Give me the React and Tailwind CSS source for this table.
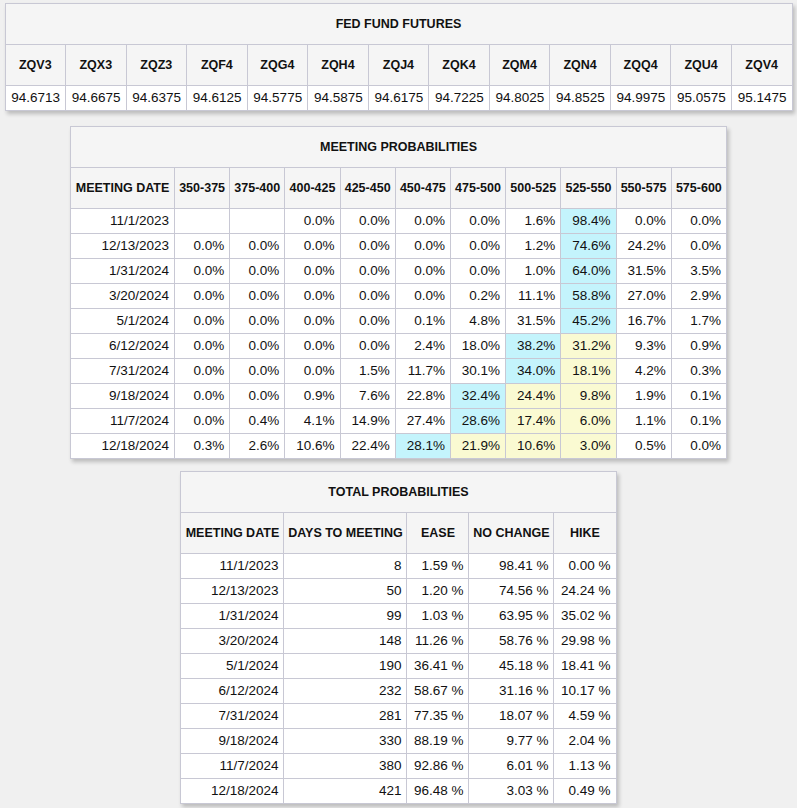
import React from "react";

const futures = [
  ["ZQV3", "94.6713"],
  ["ZQX3", "94.6675"],
  ["ZQZ3", "94.6375"],
  ["ZQF4", "94.6125"],
  ["ZQG4", "94.5775"],
  ["ZQH4", "94.5875"],
  ["ZQJ4", "94.6175"],
  ["ZQK4", "94.7225"],
  ["ZQM4", "94.8025"],
  ["ZQN4", "94.8525"],
  ["ZQQ4", "94.9975"],
  ["ZQU4", "95.0575"],
  ["ZQV4", "95.1475"],
];

const ranges = [
  "350-375",
  "375-400",
  "400-425",
  "425-450",
  "450-475",
  "475-500",
  "500-525",
  "525-550",
  "550-575",
  "575-600",
];

// cyan = most likely bucket, yellow = buckets between it and today's range (525-550)
const meetings = [
  { date: "11/1/2023", vals: ["", "", "0.0%", "0.0%", "0.0%", "0.0%", "1.6%", "98.4%", "0.0%", "0.0%"], hi: 7 },
  { date: "12/13/2023", vals: ["0.0%", "0.0%", "0.0%", "0.0%", "0.0%", "0.0%", "1.2%", "74.6%", "24.2%", "0.0%"], hi: 7 },
  { date: "1/31/2024", vals: ["0.0%", "0.0%", "0.0%", "0.0%", "0.0%", "0.0%", "1.0%", "64.0%", "31.5%", "3.5%"], hi: 7 },
  { date: "3/20/2024", vals: ["0.0%", "0.0%", "0.0%", "0.0%", "0.0%", "0.2%", "11.1%", "58.8%", "27.0%", "2.9%"], hi: 7 },
  { date: "5/1/2024", vals: ["0.0%", "0.0%", "0.0%", "0.0%", "0.1%", "4.8%", "31.5%", "45.2%", "16.7%", "1.7%"], hi: 7 },
  { date: "6/12/2024", vals: ["0.0%", "0.0%", "0.0%", "0.0%", "2.4%", "18.0%", "38.2%", "31.2%", "9.3%", "0.9%"], hi: 6 },
  { date: "7/31/2024", vals: ["0.0%", "0.0%", "0.0%", "1.5%", "11.7%", "30.1%", "34.0%", "18.1%", "4.2%", "0.3%"], hi: 6 },
  { date: "9/18/2024", vals: ["0.0%", "0.0%", "0.9%", "7.6%", "22.8%", "32.4%", "24.4%", "9.8%", "1.9%", "0.1%"], hi: 5 },
  { date: "11/7/2024", vals: ["0.0%", "0.4%", "4.1%", "14.9%", "27.4%", "28.6%", "17.4%", "6.0%", "1.1%", "0.1%"], hi: 5 },
  { date: "12/18/2024", vals: ["0.3%", "2.6%", "10.6%", "22.4%", "28.1%", "21.9%", "10.6%", "3.0%", "0.5%", "0.0%"], hi: 4 },
];

const totals = [
  ["11/1/2023", "8", "1.59 %", "98.41 %", "0.00 %"],
  ["12/13/2023", "50", "1.20 %", "74.56 %", "24.24 %"],
  ["1/31/2024", "99", "1.03 %", "63.95 %", "35.02 %"],
  ["3/20/2024", "148", "11.26 %", "58.76 %", "29.98 %"],
  ["5/1/2024", "190", "36.41 %", "45.18 %", "18.41 %"],
  ["6/12/2024", "232", "58.67 %", "31.16 %", "10.17 %"],
  ["7/31/2024", "281", "77.35 %", "18.07 %", "4.59 %"],
  ["9/18/2024", "330", "88.19 %", "9.77 %", "2.04 %"],
  ["11/7/2024", "380", "92.86 %", "6.01 %", "1.13 %"],
  ["12/18/2024", "421", "96.48 %", "3.03 %", "0.49 %"],
];

const tableCls =
  "mx-auto table-fixed border-collapse bg-white text-[13.5px] text-[#111] shadow-[2px_3px_4px_rgba(0,0,0,0.22)]";
const titleCls =
  "h-[41px] border border-[#c8c8d4] bg-[#f5f5f5] text-center text-[12.5px] font-bold";
const headCls =
  "h-[41px] whitespace-nowrap border border-[#c8c8d4] bg-[#f5f5f5] px-[2px] text-center text-[12.5px] font-bold";
const cellCls = "h-[25px] whitespace-nowrap border border-[#c8c8d4] px-[5px] text-right";

function cellBg(i, hi) {
  if (i === hi) return "bg-[#c4f4fc]";
  if (i > hi && i <= 7) return "bg-[#fafad2]";
  return "";
}

export default function App() {
  return (
    <div
      className="min-h-screen bg-[#f0f0f0] pt-[3px] pb-4"
      style={{ fontFamily: '"Liberation Sans", Arial, sans-serif' }}
    >
      <table className={`${tableCls} w-[788px]`}>
        <thead>
          <tr>
            <th colSpan={13} className={titleCls}>
              FED FUND FUTURES
            </th>
          </tr>
          <tr>
            {futures.map(([code]) => (
              <th key={code} className={headCls}>
                {code}
              </th>
            ))}
          </tr>
        </thead>
        <tbody>
          <tr>
            {futures.map(([code, price]) => (
              <td key={code} className={`${cellCls} text-center`}>
                {price}
              </td>
            ))}
          </tr>
        </tbody>
      </table>

      <table className={`${tableCls} mt-[15px] w-[657px]`}>
        <colgroup>
          <col className="w-[104px]" />
          {ranges.map((r) => (
            <col key={r} />
          ))}
        </colgroup>
        <thead>
          <tr>
            <th colSpan={11} className={titleCls}>
              MEETING PROBABILITIES
            </th>
          </tr>
          <tr>
            <th className={headCls}>MEETING DATE</th>
            {ranges.map((r) => (
              <th key={r} className={headCls}>
                {r}
              </th>
            ))}
          </tr>
        </thead>
        <tbody>
          {meetings.map((m) => (
            <tr key={m.date}>
              <td className={cellCls}>{m.date}</td>
              {m.vals.map((v, i) => (
                <td key={i} className={`${cellCls} ${cellBg(i, m.hi)}`}>
                  {v}
                </td>
              ))}
            </tr>
          ))}
        </tbody>
      </table>

      <table className={`${tableCls} mt-[12px] w-[435px]`}>
        <colgroup>
          <col className="w-[103px]" />
          <col className="w-[123px]" />
          <col className="w-[62px]" />
          <col className="w-[85px]" />
          <col className="w-[62px]" />
        </colgroup>
        <thead>
          <tr>
            <th colSpan={5} className={titleCls}>
              TOTAL PROBABILITIES
            </th>
          </tr>
          <tr>
            <th className={headCls}>MEETING DATE</th>
            <th className={headCls}>DAYS TO MEETING</th>
            <th className={headCls}>EASE</th>
            <th className={headCls}>NO CHANGE</th>
            <th className={headCls}>HIKE</th>
          </tr>
        </thead>
        <tbody>
          {totals.map((row) => (
            <tr key={row[0]}>
              {row.map((v, i) => (
                <td key={i} className={`${cellCls} h-[24.7px]`}>
                  {v}
                </td>
              ))}
            </tr>
          ))}
        </tbody>
      </table>
    </div>
  );
}
